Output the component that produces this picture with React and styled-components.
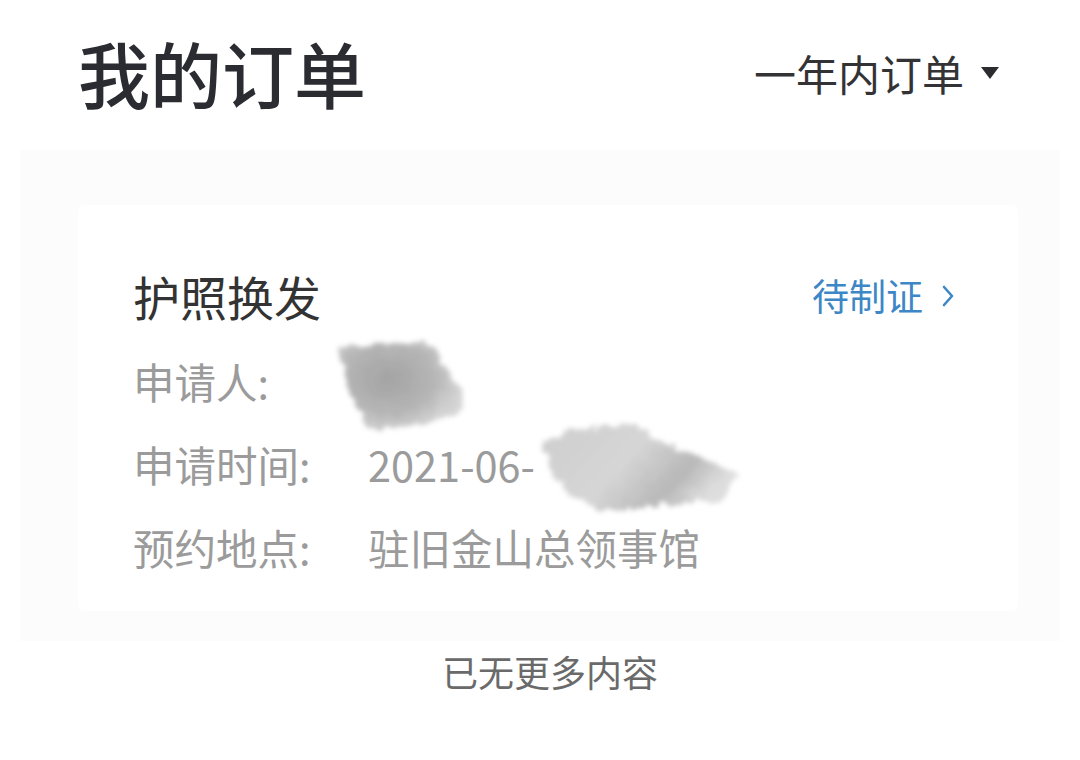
import React from "react";
import styled, { createGlobalStyle } from "styled-components";

const Global = createGlobalStyle`
  html, body { margin: 0; padding: 0; background: #ffffff; }
  body { font-family: "Noto Sans CJK SC", "Noto Sans", sans-serif; }
`;

const Page = styled.div`
  width: 1080px;
  height: 760px;
  display: flex;
  flex-direction: column;
  background: #ffffff;
  overflow: hidden;
`;

const Header = styled.header`
  display: flex;
  align-items: center;
  justify-content: space-between;
  padding: 32px 80px 0 78px;
  height: 80px;
`;

const Title = styled.h1`
  margin: 0;
  font-size: 72px;
  line-height: 1;
  font-weight: 500;
  color: #2b2b32;
`;

const Filter = styled.button`
  display: flex;
  align-items: center;
  gap: 16px;
  border: 0;
  background: none;
  padding: 0;
  margin-top: 2px;
  font-family: inherit;
  font-size: 42px;
  line-height: 1;
  color: #333336;
  cursor: pointer;
`;

const Panel = styled.section`
  margin: 38px 20px 0 20px;
  padding: 55px 42px 30px 58px;
  background: #fcfcfc;
`;

const Card = styled.article`
  background: #ffffff;
  border-radius: 6px;
  padding: 67px 63px 22px 55px;
  display: flex;
  flex-direction: column;
`;

const CardHead = styled.div`
  display: flex;
  align-items: center;
  justify-content: space-between;
  margin-bottom: 21px;
`;

const CardTitle = styled.h2`
  margin: 0;
  font-size: 47px;
  line-height: 1;
  font-weight: 400;
  color: #333333;
`;

const Status = styled.a`
  display: flex;
  align-items: center;
  gap: 18px;
  font-size: 37px;
  line-height: 1;
  color: #3d87c6;
  text-decoration: none;
`;

const Row = styled.div`
  display: grid;
  grid-template-columns: 235px 1fr;
  align-items: center;
  height: 83px;
  font-size: 41.5px;
  line-height: 1;
  color: #9b9b9b;
`;

const Label = styled.span``;

const Value = styled.span`
  position: relative;
`;

const Smudge = styled.svg`
  position: absolute;
  left: ${(p) => p.$left}px;
  top: ${(p) => p.$top}px;
  pointer-events: none;
  overflow: visible;
`;

const Footer = styled.p`
  margin: 12px 0 0 0;
  padding-left: 20px;
  text-align: center;
  font-size: 36px;
  line-height: 1;
  color: #6a6a6a;
`;

const Caret = () => (
  <svg width="20" height="14" viewBox="0 0 20 14">
    <path d="M1 1 L19 1 L10 13 Z" fill="#2b2b30" />
  </svg>
);

const Chevron = () => (
  <svg width="14" height="24" viewBox="0 0 14 24">
    <path d="M3 3 L11 12 L3 21" fill="none" stroke="#3d87c6" strokeWidth="2.6" strokeLinecap="round" strokeLinejoin="round" />
  </svg>
);

const Rough = ({ id, seed }) => (
  <filter id={id} x="-20%" y="-20%" width="140%" height="140%">
    <feTurbulence type="fractalNoise" baseFrequency="0.08" numOctaves="3" seed={seed} result="t" />
    <feDisplacementMap in="SourceGraphic" in2="t" scale="14" xChannelSelector="R" yChannelSelector="G" result="d" />
    <feGaussianBlur in="d" stdDeviation="2.5" />
  </filter>
);

export default function App() {
  return (
    <Page>
      <Global />
      <Header>
        <Title>我的订单</Title>
        <Filter>
          一年内订单
          <Caret />
        </Filter>
      </Header>
      <Panel>
        <Card>
          <CardHead>
            <CardTitle>护照换发</CardTitle>
            <Status href="#">
              待制证
              <Chevron />
            </Status>
          </CardHead>
          <Row>
            <Label>申请人:</Label>
            <Value>
              &nbsp;
              <Smudge $left={-34} $top={-26} width="135" height="96" viewBox="0 0 135 96">
                <defs>
                  <Rough id="g1" seed="3" />
                  <radialGradient id="r1" cx="0.4" cy="0.45" r="0.6">
                    <stop offset="0" stopColor="#9a9a9a" />
                    <stop offset="0.6" stopColor="#adadad" />
                    <stop offset="1" stopColor="#d0d0d0" />
                  </radialGradient>
                </defs>
                <path d="M6 12 L70 8 L92 2 L112 30 L128 58 L126 80 L86 90 L40 94 L20 70 L10 40 Z" fill="url(#r1)" filter="url(#g1)" opacity="0.9" />
              </Smudge>
            </Value>
          </Row>
          <Row>
            <Label>申请时间:</Label>
            <Value>
              2021-06-
              <Smudge $left={172} $top={-22} width="205" height="92" viewBox="0 0 205 92">
                <defs>
                  <Rough id="g2" seed="7" />
                  <linearGradient id="l2" x1="0" y1="0" x2="1" y2="0.4">
                    <stop offset="0" stopColor="#c6c6c6" />
                    <stop offset="0.5" stopColor="#cfcfcf" />
                    <stop offset="0.8" stopColor="#acacac" />
                    <stop offset="1" stopColor="#d8d8d8" />
                  </linearGradient>
                </defs>
                <path d="M4 20 L40 6 L96 4 L120 18 L170 40 L200 52 L182 78 L120 84 L60 90 L30 74 L12 50 Z" fill="url(#l2)" filter="url(#g2)" opacity="0.85" />
              </Smudge>
            </Value>
          </Row>
          <Row>
            <Label>预约地点:</Label>
            <Value>驻旧金山总领事馆</Value>
          </Row>
        </Card>
      </Panel>
      <Footer>已无更多内容</Footer>
    </Page>
  );
}
